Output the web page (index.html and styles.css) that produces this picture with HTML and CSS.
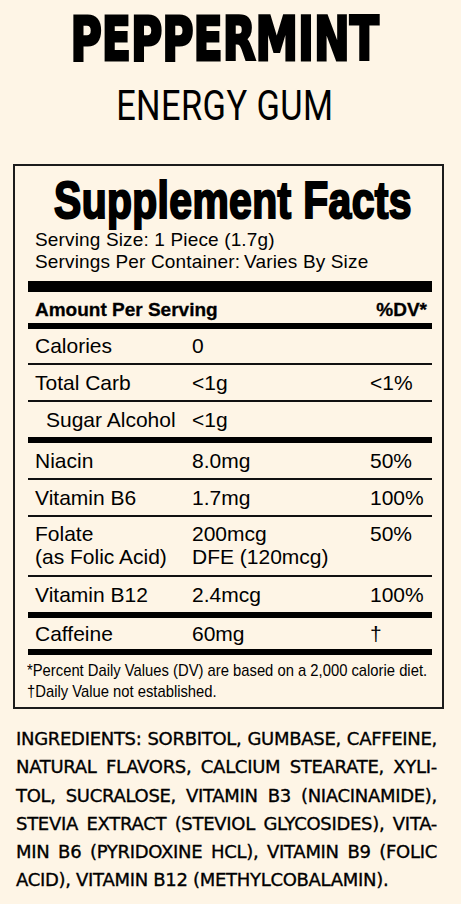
FILE: index.html
```html
<!DOCTYPE html>
<html lang="en">
<head>
<meta charset="utf-8">
<title>Peppermint Energy Gum</title>
<link rel="stylesheet" href="styles.css">
</head>
<body>
<header class="brand">
  <h1 class="flavor"><span>PEPPERMINT</span></h1>
  <p class="type"><span>ENERGY GUM</span></p>
</header>

<section class="facts">
  <h2 class="facts-title"><span>Supplement Facts</span></h2>
  <p class="serving">Serving Size: 1 Piece (1.7g)<br>Servings Per Container:&#8201;Varies By Size</p>
  <div class="bar bar-xl"></div>
  <div class="head"><span>Amount Per Serving</span><span>%DV*</span></div>
  <div class="bar bar-m"></div>

  <div class="row line first"><span>Calories</span><span>0</span><span></span></div>
  <div class="row line"><span>Total Carb</span><span>&lt;1g</span><span>&lt;1%</span></div>
  <div class="row thick"><span class="sub">Sugar Alcohol</span><span>&lt;1g</span><span></span></div>
  <div class="row line"><span>Niacin</span><span>8.0mg</span><span>50%</span></div>
  <div class="row line"><span>Vitamin B6</span><span>1.7mg</span><span>100%</span></div>
  <div class="row line multi"><span>Folate<br>(as Folic Acid)</span><span>200mcg<br>DFE (120mcg)</span><span>50%</span></div>
  <div class="row thick"><span>Vitamin B12</span><span>2.4mcg</span><span>100%</span></div>
  <div class="row thick short"><span>Caffeine</span><span>60mg</span><span>†</span></div>

  <p class="note"><span>*Percent Daily Values (DV) are based on a 2,000 calorie diet.<br>†Daily Value not established.</span></p>
</section>

<section class="ingredients">
  <div class="ln">INGREDIENTS: SORBITOL, GUMBASE, CAFFEINE,</div>
  <div class="ln">NATURAL FLAVORS, CALCIUM STEARATE, XYLI-</div>
  <div class="ln">TOL, SUCRALOSE, VITAMIN B3 (NIACINAMIDE),</div>
  <div class="ln">STEVIA EXTRACT (STEVIOL GLYCOSIDES), VITA-</div>
  <div class="ln">MIN B6 (PYRIDOXINE HCL), VITAMIN B9 (FOLIC</div>
  <div class="ln last">ACID), VITAMIN B12 (METHYLCOBALAMIN).</div>
</section>
</body>
</html>
```

FILE: styles.css
```css
* { box-sizing: border-box; }
html, body { margin: 0; padding: 0; }
body {
  background: #fef5e6;
  color: #000;
  width: 461px;
  height: 904px;
  overflow: hidden;
  font-family: "Liberation Sans", Arial, sans-serif;
}

.brand {
  padding: 9px 11px 0 0;
}
.flavor {
  margin: 0;
  display: flex;
  justify-content: center;
  font-family: "DejaVu Sans", sans-serif;
  font-weight: 700;
  font-size: 60px;
  line-height: 60px;
}
.flavor span {
  display: inline-block;
  white-space: nowrap;
  transform: scaleX(0.712);
  -webkit-text-stroke: 3px #000;
}
.type {
  margin: 15px 0 0;
  display: flex;
  justify-content: center;
  font-family: Roboto, sans-serif;
  font-weight: 400;
  font-size: 43px;
  line-height: 43px;
}
.type span {
  display: inline-block;
  white-space: nowrap;
  transform: scaleX(0.8);
  letter-spacing: 0.5px;
}

.facts {
  margin: 37px 0 0 13px;
  width: 431px;
  border: 2px solid #1c1c1c;
  padding: 9px 10px 5px 13px;
  overflow: hidden;
}
.facts-title {
  margin: 0;
  padding-left: 6px;
  display: flex;
  justify-content: center;
  font-family: "Liberation Sans", Arial, sans-serif;
  font-weight: 700;
  font-size: 52px;
  line-height: 51px;
}
.facts-title span {
  display: inline-block;
  white-space: nowrap;
  transform: scaleX(0.785);
  -webkit-text-stroke: 2.2px #000;
  letter-spacing: 0.5px;
}
.serving {
  margin: 3px 0 0 7px;
  font-size: 19px;
  line-height: 22px;
  letter-spacing: 0.15px;
}
.bar { background: #000; }
.bar-xl { height: 11px; margin-top: 8px; }
.bar-m { height: 6px; }
.head {
  display: flex;
  justify-content: space-between;
  height: 31px;
  padding: 4px 5px 0 7px;
  font-weight: 700;
  font-size: 19px;
  line-height: 27px;
}
.head span {
  -webkit-text-stroke: 0.3px #000;
}

.row {
  display: grid;
  grid-template-columns: 157px 178px 1fr;
  padding-left: 7px;
  font-size: 21px;
  line-height: 35px;
  white-space: nowrap;
}
.row.first { line-height: 34px; }
.line { border-bottom: 2px solid #111; }
.thick { border-bottom: 6px solid #000; }
.sub { padding-left: 11px; }
.multi {
  line-height: 23px;
  padding-top: 5px;
  padding-bottom: 7px;
}
.short { line-height: 31px; }

.note {
  margin: 5px 0 0 -1px;
  font-size: 17px;
  line-height: 21px;
  white-space: nowrap;
}
.note span {
  display: inline-block;
  transform: scaleX(0.87);
  transform-origin: left center;
}

.ingredients {
  margin: 16px 24px 0 16px;
  font-family: "DejaVu Sans", sans-serif;
  font-size: 18px;
  line-height: 28.3px;
  letter-spacing: -0.3px;
  -webkit-text-stroke: 0.35px #000;
}
.ln {
  white-space: nowrap;
  text-align: justify;
  text-align-last: justify;
}
.ln.last { text-align-last: left; }
```
